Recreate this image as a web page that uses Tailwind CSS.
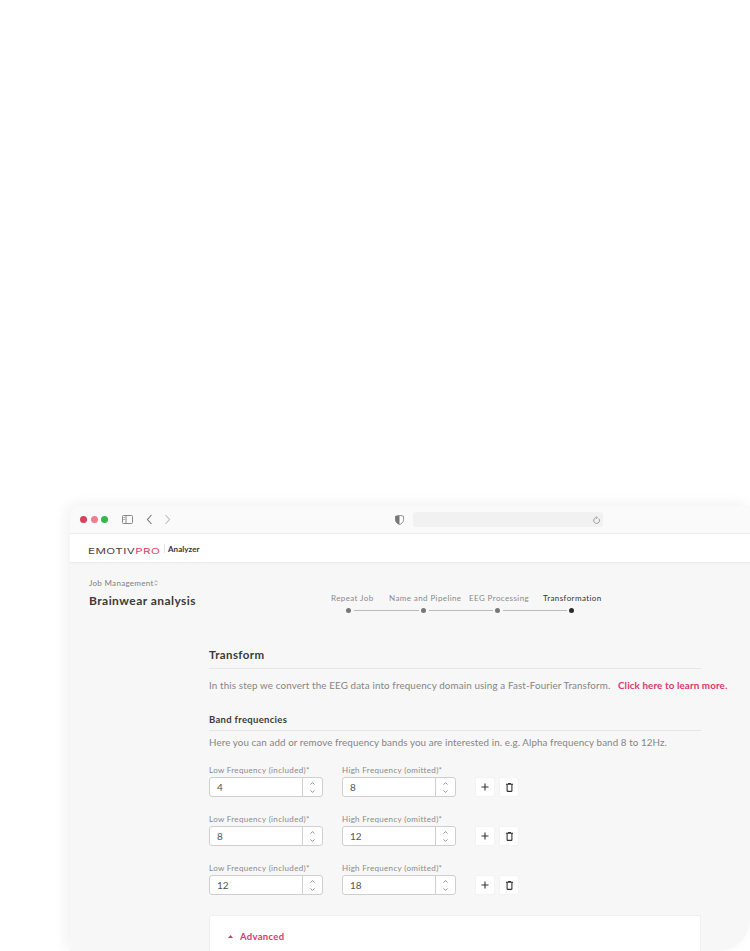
<!DOCTYPE html>
<html lang="en">
<head>
    <meta charset="UTF-8">
    <meta name="viewport" content="width=device-width, initial-scale=1.0">
    <title>Brainwear analysis</title>
    <script src="https://cdn.jsdelivr.net/npm/@tailwindcss/browser@4"></script>
</head>
<body class="bg-white overflow-hidden font-['Lato',sans-serif]">
    <div class="h-[951px] pt-[506px] pl-[70px] overflow-hidden">
        <div class="h-[445px] bg-[#f7f7f7] rounded-tl-[10px] rounded-br-[32px] overflow-hidden shadow-[-4px_-2px_14px_rgba(0,0,0,0.06)]">
            <!-- browser toolbar -->
            <div class="h-[28px] bg-[#fafafa] border-b border-[#ececec] flex items-center pl-[10px]">
                <span class="w-[7px] h-[7px] rounded-full bg-[#d9405c]"></span>
                <span class="w-[7px] h-[7px] rounded-full bg-[#ee7f8e] ml-[3.5px]"></span>
                <span class="w-[7px] h-[7px] rounded-full bg-[#35b84b] ml-[3.5px]"></span>
                <svg class="ml-[14px]" width="11" height="9" viewBox="0 0 11 9" fill="none" stroke="#888" stroke-width="1"><rect x="0.5" y="0.5" width="10" height="8" rx="1"/><path d="M4 .5v8M1.5 2.5h1.2M1.5 4.5h1.2"/></svg>
                <svg class="ml-[13px]" width="7" height="11" viewBox="0 0 7 11" fill="none" stroke="#777" stroke-width="1.1"><path d="M5.5 1 1.5 5.5l4 4.5"/></svg>
                <svg class="ml-[11px]" width="7" height="11" viewBox="0 0 7 11" fill="none" stroke="#bbb" stroke-width="1.1"><path d="M1.5 1l4 4.5-4 4.5"/></svg>
                <svg class="ml-[224px]" width="9" height="10" viewBox="0 0 9 10"><path d="M.5 1.2 4.5.4l4 .8v3.6c0 2.4-2 4-4 4.8-2-.8-4-2.4-4-4.8z" fill="#fff" stroke="#777" stroke-width=".8"/><path d="M4.5.4v9.2c-2-.8-4-2.4-4-4.8V1.2z" fill="#777"/></svg>
                <div class="ml-[9px] w-[190px] h-[15px] rounded-[3px] bg-[#f1f1f1] flex items-center justify-end pr-[3px]">
                    <svg width="7" height="8" viewBox="0 0 7 8" fill="none" stroke="#888" stroke-width=".8"><path d="M5.8 2.6A2.9 2.9 0 1 1 3.5 1.6M3.2.4l1.2 1.2-1.2 1.1"/></svg>
                </div>
            </div>
            <!-- app header -->
            <div class="h-[29px] bg-white border-b border-[#ececec] flex items-center pl-[18px] shadow-[0_1px_2px_rgba(0,0,0,0.03)]">
                <span class="w-[72px] shrink-0"><span class="inline-block origin-left scale-x-[1.45] text-[8px] leading-none tracking-[0.3px] font-['Inter',sans-serif] text-[#444] whitespace-nowrap">EMOTIV<span class="text-[#e0406a]">PRO</span></span></span>
                <span class="w-px h-[9px] bg-[#e4e4e4] ml-[4px]"></span>
                <span class="ml-[3px] mt-px text-[8px] font-bold text-[#333] tracking-[0.05px]">Analyzer</span>
            </div>
            <!-- page title and stepper -->
            <div class="h-[62px] flex">
                <div class="w-[246px] pl-[19px] pt-[15px] shrink-0">
                    <div class="flex items-center text-[8px] leading-[10px] tracking-[0.3px] text-[#808080]">Job Management
                        <svg width="4" height="6" viewBox="0 0 4 6" fill="none" stroke="#808080" stroke-width=".7"><path d="M.5 2 2 .7 3.5 2M.5 3.8 2 5.3 3.5 3.8"/></svg>
                    </div>
                    <div class="mt-[5px] text-[12px] leading-[16px] tracking-[0.45px] font-bold text-[#3a3a3a]">Brainwear analysis</div>
                </div>
                <div class="w-[300px] pt-[30px] shrink-0">
                    <div class="h-[10px] text-[8px] leading-[10px] tracking-[0.4px] text-[#8a8a8a] whitespace-nowrap flex">
                        <span class="ml-[15px] w-[58px]">Repeat Job</span>
                        <span class="w-[80px]">Name and Pipeline</span>
                        <span class="w-[74px]">EEG Processing</span>
                        <span class="text-[#333]">Transformation</span>
                    </div>
                    <div class="mt-[5px] flex items-center pl-[30px]">
                        <span class="w-[5px] h-[5px] rounded-full bg-[#777]"></span>
                        <span class="w-[65px] h-px bg-[#bbb] ml-[3px]"></span>
                        <span class="w-[5px] h-[5px] rounded-full bg-[#777] ml-[2px]"></span>
                        <span class="w-[64px] h-px bg-[#bbb] ml-[3px]"></span>
                        <span class="w-[5px] h-[5px] rounded-full bg-[#777] ml-[2px]"></span>
                        <span class="w-[64px] h-px bg-[#bbb] ml-[3px]"></span>
                        <span class="w-[5px] h-[5px] rounded-full bg-[#2b2b2b] ml-[2px]"></span>
                    </div>
                </div>
            </div>
            <!-- transform form -->
            <div class="ml-[139px] w-[492px] pt-[22px]">
                <h2 class="text-[11.5px] leading-[16px] tracking-[0.4px] font-bold text-[#3a3a3a]">Transform</h2>
                <div class="h-px bg-[#e6e6e6] mt-[5px]"></div>
                <div class="mt-[8px] h-[16px] text-[9.8px] leading-[16px] text-[#858585] whitespace-nowrap flex">
                    <span class="w-[409px] shrink-0 tracking-[0.13px]">In this step we convert the EEG data into frequency domain using a Fast-Fourier Transform.</span>
                    <span class="shrink-0 font-bold text-[#d9386a] tracking-[0.12px]">Click here to learn more.</span>
                </div>
                <h3 class="mt-[20px] text-[9.5px] leading-[14px] tracking-[0.3px] font-bold text-[#3a3a3a]">Band frequencies</h3>
                <div class="h-px bg-[#e6e6e6] mt-[3px]"></div>
                <p class="mt-[3px] text-[9.8px] leading-[16px] tracking-[0.09px] text-[#858585] whitespace-nowrap">Here you can add or remove frequency bands you are interested in. e.g. Alpha frequency band 8 to 12Hz.</p>

                <div class="mt-[15px] flex flex-col gap-[17px]">
                    <div class="flex items-end h-[32px]">
                        <div class="w-[114px]">
                            <div class="mb-[2px] text-[8px] leading-[10px] tracking-[0.33px] text-[#8a8a8a] whitespace-nowrap">Low Frequency (included)*</div>
                            <div class="h-[20px] flex bg-white border border-[#cfcfcf] rounded-[3px] text-[10px] text-[#555]">
                                <span class="flex-1 pl-[7px] leading-[18px]">4</span>
                                <span class="w-[20px] border-l border-[#cfcfcf] flex flex-col items-center justify-center gap-[5px]">
                                    <svg width="5" height="3" viewBox="0 0 5 3" fill="none" stroke="#666" stroke-width=".7"><path d="M.5 2.6 2.5.6l2 2"/></svg>
                                    <svg width="5" height="3" viewBox="0 0 5 3" fill="none" stroke="#666" stroke-width=".7"><path d="M.5.4l2 2 2-2"/></svg>
                                </span>
                            </div>
                        </div>
                        <div class="w-[114px] ml-[19px]">
                            <div class="mb-[2px] text-[8px] leading-[10px] tracking-[0.33px] text-[#8a8a8a] whitespace-nowrap">High Frequency (omitted)*</div>
                            <div class="h-[20px] flex bg-white border border-[#cfcfcf] rounded-[3px] text-[10px] text-[#555]">
                                <span class="flex-1 pl-[7px] leading-[18px]">8</span>
                                <span class="w-[20px] border-l border-[#cfcfcf] flex flex-col items-center justify-center gap-[5px]">
                                    <svg width="5" height="3" viewBox="0 0 5 3" fill="none" stroke="#666" stroke-width=".7"><path d="M.5 2.6 2.5.6l2 2"/></svg>
                                    <svg width="5" height="3" viewBox="0 0 5 3" fill="none" stroke="#666" stroke-width=".7"><path d="M.5.4l2 2 2-2"/></svg>
                                </span>
                            </div>
                        </div>
                        <span class="ml-[19px] w-[20px] h-[20px] bg-white rounded-[2px] border border-[#f3f3f3] flex items-center justify-center">
                            <svg width="8" height="8" viewBox="0 0 8 8" stroke="#333" stroke-width="1.1"><path d="M4 .5v7M.5 4h7"/></svg>
                        </span>
                        <span class="ml-[4px] w-[20px] h-[20px] bg-white rounded-[2px] border border-[#f3f3f3] flex items-center justify-center">
                            <svg width="7" height="9" viewBox="0 0 7 9" fill="none" stroke="#333" stroke-width="1.1"><path d="M0 1.3h7M2 .5h3M1.1 1.5v6.2c0 .4.3.7.7.7h3.4c.4 0 .7-.3.7-.7V1.5"/></svg>
                        </span>
                    </div>
                    <div class="flex items-end h-[32px]">
                        <div class="w-[114px]">
                            <div class="mb-[2px] text-[8px] leading-[10px] tracking-[0.33px] text-[#8a8a8a] whitespace-nowrap">Low Frequency (included)*</div>
                            <div class="h-[20px] flex bg-white border border-[#cfcfcf] rounded-[3px] text-[10px] text-[#555]">
                                <span class="flex-1 pl-[7px] leading-[18px]">8</span>
                                <span class="w-[20px] border-l border-[#cfcfcf] flex flex-col items-center justify-center gap-[5px]">
                                    <svg width="5" height="3" viewBox="0 0 5 3" fill="none" stroke="#666" stroke-width=".7"><path d="M.5 2.6 2.5.6l2 2"/></svg>
                                    <svg width="5" height="3" viewBox="0 0 5 3" fill="none" stroke="#666" stroke-width=".7"><path d="M.5.4l2 2 2-2"/></svg>
                                </span>
                            </div>
                        </div>
                        <div class="w-[114px] ml-[19px]">
                            <div class="mb-[2px] text-[8px] leading-[10px] tracking-[0.33px] text-[#8a8a8a] whitespace-nowrap">High Frequency (omitted)*</div>
                            <div class="h-[20px] flex bg-white border border-[#cfcfcf] rounded-[3px] text-[10px] text-[#555]">
                                <span class="flex-1 pl-[7px] leading-[18px]">12</span>
                                <span class="w-[20px] border-l border-[#cfcfcf] flex flex-col items-center justify-center gap-[5px]">
                                    <svg width="5" height="3" viewBox="0 0 5 3" fill="none" stroke="#666" stroke-width=".7"><path d="M.5 2.6 2.5.6l2 2"/></svg>
                                    <svg width="5" height="3" viewBox="0 0 5 3" fill="none" stroke="#666" stroke-width=".7"><path d="M.5.4l2 2 2-2"/></svg>
                                </span>
                            </div>
                        </div>
                        <span class="ml-[19px] w-[20px] h-[20px] bg-white rounded-[2px] border border-[#f3f3f3] flex items-center justify-center">
                            <svg width="8" height="8" viewBox="0 0 8 8" stroke="#333" stroke-width="1.1"><path d="M4 .5v7M.5 4h7"/></svg>
                        </span>
                        <span class="ml-[4px] w-[20px] h-[20px] bg-white rounded-[2px] border border-[#f3f3f3] flex items-center justify-center">
                            <svg width="7" height="9" viewBox="0 0 7 9" fill="none" stroke="#333" stroke-width="1.1"><path d="M0 1.3h7M2 .5h3M1.1 1.5v6.2c0 .4.3.7.7.7h3.4c.4 0 .7-.3.7-.7V1.5"/></svg>
                        </span>
                    </div>
                    <div class="flex items-end h-[32px]">
                        <div class="w-[114px]">
                            <div class="mb-[2px] text-[8px] leading-[10px] tracking-[0.33px] text-[#8a8a8a] whitespace-nowrap">Low Frequency (included)*</div>
                            <div class="h-[20px] flex bg-white border border-[#cfcfcf] rounded-[3px] text-[10px] text-[#555]">
                                <span class="flex-1 pl-[7px] leading-[18px]">12</span>
                                <span class="w-[20px] border-l border-[#cfcfcf] flex flex-col items-center justify-center gap-[5px]">
                                    <svg width="5" height="3" viewBox="0 0 5 3" fill="none" stroke="#666" stroke-width=".7"><path d="M.5 2.6 2.5.6l2 2"/></svg>
                                    <svg width="5" height="3" viewBox="0 0 5 3" fill="none" stroke="#666" stroke-width=".7"><path d="M.5.4l2 2 2-2"/></svg>
                                </span>
                            </div>
                        </div>
                        <div class="w-[114px] ml-[19px]">
                            <div class="mb-[2px] text-[8px] leading-[10px] tracking-[0.33px] text-[#8a8a8a] whitespace-nowrap">High Frequency (omitted)*</div>
                            <div class="h-[20px] flex bg-white border border-[#cfcfcf] rounded-[3px] text-[10px] text-[#555]">
                                <span class="flex-1 pl-[7px] leading-[18px]">18</span>
                                <span class="w-[20px] border-l border-[#cfcfcf] flex flex-col items-center justify-center gap-[5px]">
                                    <svg width="5" height="3" viewBox="0 0 5 3" fill="none" stroke="#666" stroke-width=".7"><path d="M.5 2.6 2.5.6l2 2"/></svg>
                                    <svg width="5" height="3" viewBox="0 0 5 3" fill="none" stroke="#666" stroke-width=".7"><path d="M.5.4l2 2 2-2"/></svg>
                                </span>
                            </div>
                        </div>
                        <span class="ml-[19px] w-[20px] h-[20px] bg-white rounded-[2px] border border-[#f3f3f3] flex items-center justify-center">
                            <svg width="8" height="8" viewBox="0 0 8 8" stroke="#333" stroke-width="1.1"><path d="M4 .5v7M.5 4h7"/></svg>
                        </span>
                        <span class="ml-[4px] w-[20px] h-[20px] bg-white rounded-[2px] border border-[#f3f3f3] flex items-center justify-center">
                            <svg width="7" height="9" viewBox="0 0 7 9" fill="none" stroke="#333" stroke-width="1.1"><path d="M0 1.3h7M2 .5h3M1.1 1.5v6.2c0 .4.3.7.7.7h3.4c.4 0 .7-.3.7-.7V1.5"/></svg>
                        </span>
                    </div>
                </div>

                <!-- advanced card -->
                <div class="mt-[20px] h-[60px] bg-white border border-[#efefef] rounded-[2px] pl-[18px] pt-[14px] flex items-start">
                    <svg class="mt-[5px]" width="5" height="3" viewBox="0 0 5 3" fill="#d9386a"><path d="M2.5 0 5 3H0z"/></svg>
                    <span class="ml-[7px] text-[9.5px] leading-[14px] tracking-[0.3px] font-bold text-[#d9386a]">Advanced</span>
                </div>
            </div>
        </div>
    </div>
</body>
</html>
